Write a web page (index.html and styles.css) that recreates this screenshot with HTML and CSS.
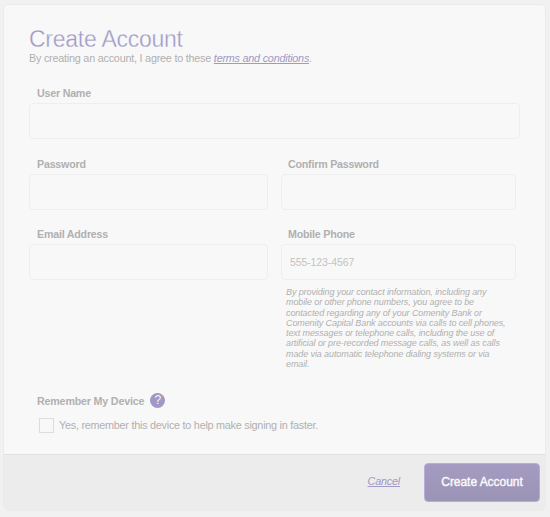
FILE: index.html
```html
<!DOCTYPE html>
<html lang="en">
<head>
<meta charset="utf-8">
<title>Create Account</title>
<link rel="stylesheet" href="styles.css">
</head>
<body>
<form class="card">
  <main class="content">
    <h1>Create Account</h1>
    <p class="intro">By creating an account, I agree to these <a href="#">terms and conditions</a>.</p>
    <div class="field full">
      <label for="user">User Name</label>
      <input id="user" type="text">
    </div>
    <div class="grid">
      <div class="field"><label for="password">Password</label><input id="password" type="password"></div>
      <div class="field"><label for="confirm">Confirm Password</label><input id="confirm" type="password"></div>
      <div class="field"><label for="email">Email Address</label><input id="email" type="email"></div>
      <div class="field"><label for="phone">Mobile Phone</label><input id="phone" type="tel" placeholder="555-123-4567"></div>
    </div>
    <p class="legal">By providing your contact information, including any<br>mobile or other phone numbers, you agree to be<br>contacted regarding any of your Comenity Bank or<br>Comenity Capital Bank accounts via calls to cell phones,<br>text messages or telephone calls, including the use of<br>artificial or pre-recorded message calls, as well as calls<br>made via automatic telephone dialing systems or via<br>email.</p>
    <div class="device"><span>Remember My Device</span><span class="help">?</span></div>
    <label class="remember"><input type="checkbox"><span>Yes, remember this device to help make signing in faster.</span></label>
  </main>
  <footer>
    <a class="cancel" href="#">Cancel</a>
    <button type="button">Create Account</button>
  </footer>
</form>
</body>
</html>
```
FILE: styles.css
```css
* { box-sizing: border-box; }
body {
  margin: 0;
  padding: 4px 4px 6px 3px;
  height: 517px;
  overflow: hidden;
  background: #f1f1f1;
  color: #b0b0b0;
  font-family: "Liberation Sans", Arial, sans-serif;
}
.card {
  height: 507px;
  display: flex;
  flex-direction: column;
  border: 1px solid #ebebeb;
  border-radius: 5px;
  background: #f8f8f8;
  overflow: hidden;
}
.content {
  height: 449px;
  padding: 21px 0 0 25px;
}
h1 {
  margin: 0;
  font-size: 23px;
  line-height: 27px;
  letter-spacing: -0.25px;
  font-weight: 400;
  color: #a098c6;
  -webkit-text-stroke: 0.35px #f8f8f8;
}
p { margin: 0; white-space: nowrap; }
.intro {
  font-size: 10.8px;
  letter-spacing: -0.22px;
  line-height: 12px;
  margin: -1px 0 22px;
}
a {
  color: #a098c6;
  font-style: italic;
  text-decoration: underline;
}
.field { display: flex; flex-direction: column; }
.field label {
  height: 16px;
  padding-left: 8px;
  font-size: 10.7px;
  letter-spacing: -0.22px;
  line-height: 12px;
  font-weight: 700;
}
.field:nth-child(2n) label { padding-left: 7px; }
.full.field label { padding-left: 8px; }
.field input {
  width: 100%;
  height: 36px;
  padding: 0 8px;
  border: 1px solid #eeeeee;
  border-radius: 4px;
  background: #f8f8f8;
  font: 10.5px "Liberation Sans", Arial, sans-serif;
  letter-spacing: -0.1px;
  outline: 0;
}
.field input::placeholder { color: #c3c3c3; opacity: 1; }
.full { width: 491px; padding-top: 1px; }
.grid {
  display: grid;
  grid-template-columns: 239px 235px;
  gap: 18px 13px;
  margin-top: 19px;
}
.legal {
  margin: 7px 0 0 257px;
  font-size: 9px;
  letter-spacing: -0.1px;
  line-height: 10.3px;
  font-style: italic;
}
.device {
  display: flex;
  align-items: center;
  gap: 6px;
  height: 15px;
  margin: 24px 0 0 8px;
  font-size: 10.7px;
  letter-spacing: -0.18px;
  font-weight: 700;
}
.help {
  width: 15px;
  height: 15px;
  border-radius: 50%;
  background: #a198c5;
  color: #f6f5fa;
  font-size: 12px;
  line-height: 15px;
  font-weight: 400;
  text-align: center;
}
.remember {
  display: flex;
  align-items: center;
  gap: 5px;
  height: 15px;
  margin: 10px 0 0 10px;
  font-size: 10.8px;
  letter-spacing: -0.24px;
}
.remember span { padding-bottom: 2px; }
.remember input {
  appearance: none;
  width: 15px;
  height: 15px;
  margin: 0;
  border: 1px solid #dddddd;
  background: #f8f8f8;
}
footer {
  flex: 1;
  display: flex;
  align-items: center;
  justify-content: flex-end;
  gap: 24px;
  padding-right: 5px;
  border-top: 1px solid #e0e0e0;
  background: #ececec;
}
.cancel { font-size: 10.8px; letter-spacing: -0.2px; padding-bottom: 3px; }
button {
  width: 116px;
  height: 39px;
  padding: 0 0 2px;
  border: 1px solid #b7addb;
  border-radius: 4px;
  background: linear-gradient(#a59bc2, #9b94b5);
  color: #fafafa;
  font: 400 12px "Liberation Sans", Arial, sans-serif;
  letter-spacing: -0.05px;
  -webkit-text-stroke: 0.4px #fafafa;
}
```
